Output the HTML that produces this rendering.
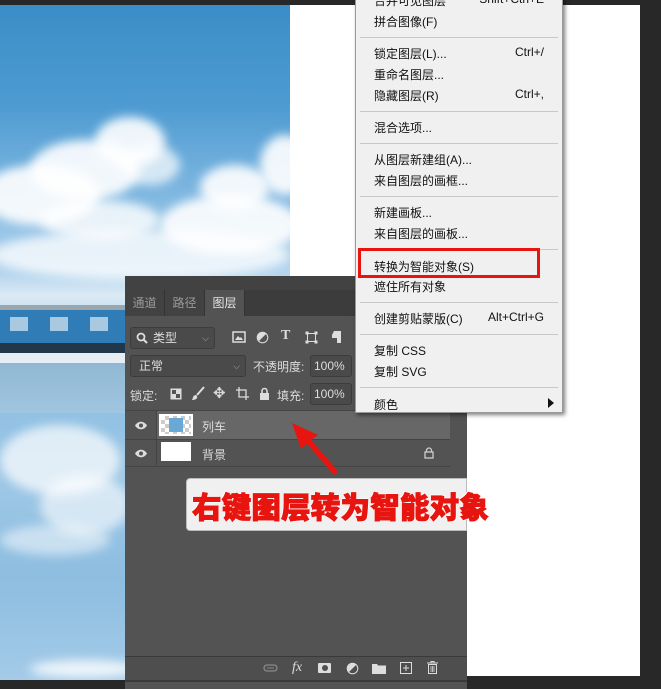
<!DOCTYPE html>
<html><head><meta charset="utf-8"><style>
*{margin:0;padding:0;box-sizing:border-box}
body{width:661px;height:689px;background:#282828;position:relative;overflow:hidden;font-family:"Liberation Sans","Noto Sans CJK SC",sans-serif;font-size:12px}
.abs{position:absolute}
#sky{left:0;top:5px;width:290px;height:675px;overflow:hidden;background:linear-gradient(#3b8dc7 0%,#4e9bd2 15%,#7fb7e0 28%,#b6d6ee 40%,#dbeaf5 43%,#a6cbe6 50%,#8ebfe2 58%,#9fc8e6 70%,#8dbde0 85%,#a4cbe8 100%)}
.cl{position:absolute;background:#fff;border-radius:50%;filter:blur(5px);opacity:.9}
#white{left:290px;top:5px;width:350px;height:671px;background:#fff}
#panel{left:125px;top:276px;width:342px;height:413px;background:#535353}
.tab{position:absolute;top:14px;height:26px;line-height:26px;color:#9a9a9a;font-size:12px;text-align:center;background:#424242;border-right:1px solid #333}
.inp{position:absolute;border:1px solid #3c3c3c;background:#4a4a4a;border-radius:3px;color:#ddd;padding-left:8px}
.t{position:absolute;color:#dcdcdc;font-size:12px;white-space:nowrap}
#menu{left:355px;top:-6px;width:208px;height:419px;background:#f0f0f0;border:1px solid #999;box-shadow:2px 2px 4px rgba(0,0,0,.5)}
.mi{position:absolute;left:18px;font-size:12px;color:#111;white-space:nowrap}
.sc{position:absolute;right:18px;font-size:12px;color:#111}
.sep{position:absolute;left:4px;right:4px;height:1px;background:#c8c8c8}
svg.i{position:absolute}
</style></head><body>
<div id="sky" class="abs">
 <div class="cl" style="left:95px;top:112px;width:70px;height:50px"></div>
 <div class="cl" style="left:30px;top:135px;width:110px;height:60px"></div>
 <div class="cl" style="left:-20px;top:160px;width:120px;height:60px"></div>
 <div class="cl" style="left:120px;top:140px;width:60px;height:40px;opacity:.7"></div>
 <div class="cl" style="left:200px;top:160px;width:70px;height:45px"></div>
 <div class="cl" style="left:260px;top:130px;width:50px;height:60px"></div>
 <div class="cl" style="left:160px;top:190px;width:140px;height:60px"></div>
 <div class="cl" style="left:40px;top:195px;width:120px;height:40px;opacity:.8"></div>
 <div class="cl" style="left:-10px;top:225px;width:300px;height:50px;opacity:.75"></div>
 <div class="abs" style="left:0;top:300px;width:125px;height:5px;background:#9aa6ae"></div>
 <div class="abs" style="left:0;top:305px;width:125px;height:36px;background:#2f7cb6"></div>
 <div class="abs" style="left:0;top:312px;width:125px;height:14px;background:repeating-linear-gradient(90deg,#2f7cb6 0 10px,#a9c9e0 10px 28px,#2f7cb6 28px 40px)"></div>
 <div class="abs" style="left:0;top:338px;width:125px;height:10px;background:#22384a"></div>
 <div class="abs" style="left:0;top:348px;width:125px;height:10px;background:#e6eef4"></div>
 <div class="abs" style="left:0;top:358px;width:125px;height:50px;background:linear-gradient(#8fb6d2,#a3c6e0);opacity:.9"></div>
 <div class="cl" style="left:0px;top:420px;width:120px;height:70px;opacity:.7"></div>
 <div class="cl" style="left:40px;top:470px;width:90px;height:60px;opacity:.6"></div>
 <div class="cl" style="left:0px;top:520px;width:110px;height:30px;opacity:.5"></div>
 <div class="cl" style="left:30px;top:655px;width:110px;height:18px;opacity:.8"></div>
</div>
<div id="white" class="abs"></div>

<div id="panel" class="abs">
 <div class="abs" style="left:0;top:0;width:342px;height:14px;background:#424242"></div>
 <div class="abs" style="left:0;top:14px;width:342px;height:26px;background:#3c3c3c"></div>
 <div class="tab" style="left:0;width:40px">通道</div>
 <div class="tab" style="left:40px;width:40px">路径</div>
 <div class="tab" style="left:80px;width:40px;background:#535353;color:#e6e6e6">图层</div>
 <div class="inp" style="left:5px;top:51px;width:85px;height:22px;line-height:20px;padding-left:22px">类型 <span style="position:absolute;right:5px;color:#aaa;font-size:9px">⌵</span></div>
 <svg class="i" style="left:11px;top:56px" width="12" height="12"><circle cx="5" cy="5" r="3.5" stroke="#ddd" stroke-width="1.8" fill="none"/><path d="M7.5 7.5L11 11" stroke="#ddd" stroke-width="2"/></svg>
 <svg class="i" style="left:107px;top:55px" width="14" height="12"><rect x="1" y="1" width="12" height="10" stroke="#ddd" fill="none" stroke-width="1.5"/><path d="M3 9l3-4 2 2 1-1 2 3z" fill="#ddd"/></svg>
 <svg class="i" style="left:131px;top:55px" width="13" height="13"><circle cx="6.5" cy="6.5" r="5.5" fill="#ddd"/><path d="M10.4 2.6A5.5 5.5 0 0 1 2.6 10.4z" fill="#535353"/><circle cx="6.5" cy="6.5" r="5.3" fill="none" stroke="#ddd" stroke-width="1"/></svg>
 <div class="t" style="left:156px;top:52px;font-size:14px;font-weight:bold;font-family:'Liberation Serif',serif">T</div>
 <svg class="i" style="left:180px;top:55px" width="13" height="13"><rect x="2.5" y="2.5" width="8" height="8" stroke="#ddd" fill="none"/><rect x="0.5" y="0.5" width="3" height="3" fill="#ddd"/><rect x="9.5" y="0.5" width="3" height="3" fill="#ddd"/><rect x="0.5" y="9.5" width="3" height="3" fill="#ddd"/><rect x="9.5" y="9.5" width="3" height="3" fill="#ddd"/></svg>
 <svg class="i" style="left:206px;top:54px" width="11" height="14"><path d="M3 1h7v12H1V5z" fill="#ddd"/><rect x="1" y="8" width="5" height="5" fill="#535353"/></svg>
 <div class="inp" style="left:5px;top:79px;width:116px;height:22px;line-height:20px">正常<span style="position:absolute;right:5px;color:#aaa;font-size:9px">⌵</span></div>
 <div class="t" style="left:128px;top:82px">不透明度:</div>
 <div class="inp" style="left:185px;top:79px;width:42px;height:22px;line-height:20px;padding-left:3px">100%</div>
 <div class="t" style="left:5px;top:111px">锁定:</div>
 <svg class="i" style="left:45px;top:112px" width="12" height="12"><rect x="0.5" y="0.5" width="11" height="11" fill="#ddd"/><rect x="2" y="2" width="4" height="4" fill="#535353"/><rect x="6" y="6" width="4" height="4" fill="#535353"/></svg>
 <svg class="i" style="left:66px;top:110px" width="14" height="15"><path d="M13 1L6 9" stroke="#ddd" stroke-width="2"/><path d="M5 9c-3 0-3 3-4 5 3 0 6-1 5-4z" fill="#ddd"/></svg>
 <div class="t" style="left:88px;top:108px;font-size:15px">✥</div>
 <svg class="i" style="left:111px;top:111px" width="13" height="13"><path d="M3 0v10h10M0 3h10v10" stroke="#ddd" fill="none" stroke-width="1.3"/></svg>
 <svg class="i" style="left:134px;top:111px" width="11" height="13"><path d="M3 6V4a2.5 2.5 0 0 1 5 0v2" stroke="#ddd" fill="none" stroke-width="1.6"/><rect x="1" y="6" width="9" height="7" fill="#ddd"/></svg>
 <div class="t" style="left:152px;top:111px">填充:</div>
 <div class="inp" style="left:185px;top:107px;width:42px;height:22px;line-height:20px;padding-left:3px">100%</div>
 <div class="abs" style="left:0;top:134px;width:342px;height:1px;background:#444"></div>
 <div class="abs" style="left:31px;top:135px;width:294px;height:28px;background:#676767"></div>
 <div class="abs" style="left:0;top:163px;width:325px;height:1px;background:#444"></div>
 <div class="abs" style="left:0;top:190px;width:325px;height:1px;background:#444"></div>
 <div class="abs" style="left:31px;top:135px;width:1px;height:56px;background:#444"></div>
 <svg class="i" style="left:9px;top:145px" width="14" height="9"><path d="M1 4.5C4-.5 10-.5 13 4.5 10 9.5 4 9.5 1 4.5z" fill="#ddd"/><circle cx="7" cy="4.5" r="2" fill="#535353"/></svg>
 <svg class="i" style="left:9px;top:173px" width="14" height="9"><path d="M1 4.5C4-.5 10-.5 13 4.5 10 9.5 4 9.5 1 4.5z" fill="#ddd"/><circle cx="7" cy="4.5" r="2" fill="#535353"/></svg>
 <div class="abs" style="left:34px;top:138px;width:34px;height:22px;border:2px solid #fff;background:repeating-conic-gradient(#ccc 0 25%,#fff 0 50%) 0 0/8px 8px"><div style="margin:2px 8px;height:14px;background:#6aa8d6"></div></div>
 <div class="abs" style="left:36px;top:166px;width:30px;height:19px;background:#fff"></div>
 <div class="t" style="left:77px;top:142px">列车</div>
 <div class="t" style="left:77px;top:170px">背景</div>
 <svg class="i" style="left:299px;top:171px" width="10" height="12"><path d="M2.5 5V3.5a2.5 2.5 0 0 1 5 0V5" stroke="#ccc" fill="none" stroke-width="1.3"/><rect x="1" y="5" width="8" height="6" fill="none" stroke="#ccc" stroke-width="1.3"/></svg>
 <div class="abs" style="left:0;top:380px;width:342px;height:1px;background:#3a3a3a"></div>
 <div class="abs" style="left:0;top:381px;width:342px;height:23px;background:#4e4e4e"></div>
 <svg class="i" style="left:138px;top:388px" width="15" height="8"><rect x="1" y="1" width="13" height="6" rx="3" stroke="#888" fill="none" stroke-width="1.3"/><path d="M4 4h7" stroke="#888"/></svg>
 <div class="t" style="left:167px;top:384px;font-style:italic;font-family:'Liberation Serif',serif;font-size:14px">fx</div>
 <div class="abs" style="left:193px;top:387px;width:13px;height:10px;background:#ddd;border-radius:1px"><div style="width:6px;height:6px;margin:2px 3.5px;border-radius:50%;background:#4e4e4e"></div></div>
 <svg class="i" style="left:221px;top:386px" width="13" height="13"><circle cx="6.5" cy="6.5" r="5.5" fill="#ddd"/><path d="M10.4 2.6A5.5 5.5 0 0 1 2.6 10.4z" fill="#4e4e4e"/><circle cx="6.5" cy="6.5" r="5.3" fill="none" stroke="#ddd" stroke-width="1"/></svg>
 <svg class="i" style="left:247px;top:387px" width="14" height="11"><path d="M0 1h5l1 1.5h8V11H0z" fill="#ddd"/></svg>
 <svg class="i" style="left:275px;top:386px" width="12" height="12"><rect x="0.5" y="0.5" width="11" height="11" stroke="#ddd" fill="none"/><path d="M6 3v6M3 6h6" stroke="#ddd"/></svg>
 <svg class="i" style="left:302px;top:385px" width="11" height="13"><path d="M0 2h11M4 2V0.5h3V2" stroke="#ddd" fill="none"/><path d="M1.5 3.5h8V12.5h-8z" stroke="#ddd" fill="none"/><path d="M4 5v6M5.5 5v6M7 5v6" stroke="#ddd" stroke-width=".8"/></svg>
 <div class="abs" style="left:0;top:404px;width:342px;height:2px;background:#3a3a3a"></div>
</div>

<div class="abs" style="left:186px;top:478px;width:281px;height:53px;background:#f0f0f0;border:1px solid #bbb;border-radius:4px 0 0 4px"></div>
<div class="abs" style="left:192px;top:485px;font-size:29.5px;letter-spacing:.2px;font-weight:900;color:#e8140f;white-space:nowrap;-webkit-text-stroke:1px #e8140f;text-shadow:0 0 2px #fff,1px 1px 0 #fff,-1px -1px 0 #fff">右键图层转为智能对象</div>

<svg class="abs" style="left:280px;top:415px" width="70" height="65"><polygon points="12,8 38,20 31,25 58,56 54,60 27,29 21,34" fill="#e8140f"/></svg>

<div id="menu" class="abs">
 <div class="mi" style="top:-3px">合并可见图层</div><div class="sc" style="top:-3px">Shift+Ctrl+E</div>
 <div class="mi" style="top:18px">拼合图像(F)</div>
 <div class="sep" style="top:42px"></div>
 <div class="mi" style="top:50px">锁定图层(L)...</div><div class="sc" style="top:50px">Ctrl+/</div>
 <div class="mi" style="top:71px">重命名图层...</div>
 <div class="mi" style="top:92px">隐藏图层(R)</div><div class="sc" style="top:92px">Ctrl+,</div>
 <div class="sep" style="top:116px"></div>
 <div class="mi" style="top:124px">混合选项...</div>
 <div class="sep" style="top:148px"></div>
 <div class="mi" style="top:156px">从图层新建组(A)...</div>
 <div class="mi" style="top:177px">来自图层的画框...</div>
 <div class="sep" style="top:201px"></div>
 <div class="mi" style="top:209px">新建画板...</div>
 <div class="mi" style="top:230px">来自图层的画板...</div>
 <div class="sep" style="top:254px"></div>
 <div class="mi" style="top:263px">转换为智能对象(S)</div>
 <div class="abs" style="left:2px;top:253px;width:182px;height:30px;border:3px solid #e8140f"></div>
 <div class="mi" style="top:283px">遮住所有对象</div>
 <div class="sep" style="top:307px"></div>
 <div class="mi" style="top:315px">创建剪贴蒙版(C)</div><div class="sc" style="top:315px">Alt+Ctrl+G</div>
 <div class="sep" style="top:339px"></div>
 <div class="mi" style="top:347px">复制 CSS</div>
 <div class="mi" style="top:368px">复制 SVG</div>
 <div class="sep" style="top:392px"></div>
 <div class="mi" style="top:401px">颜色</div>
 <div class="abs" style="right:8px;top:403px;width:0;height:0;border-left:6px solid #111;border-top:5px solid transparent;border-bottom:5px solid transparent"></div>
</div>
</body></html>
